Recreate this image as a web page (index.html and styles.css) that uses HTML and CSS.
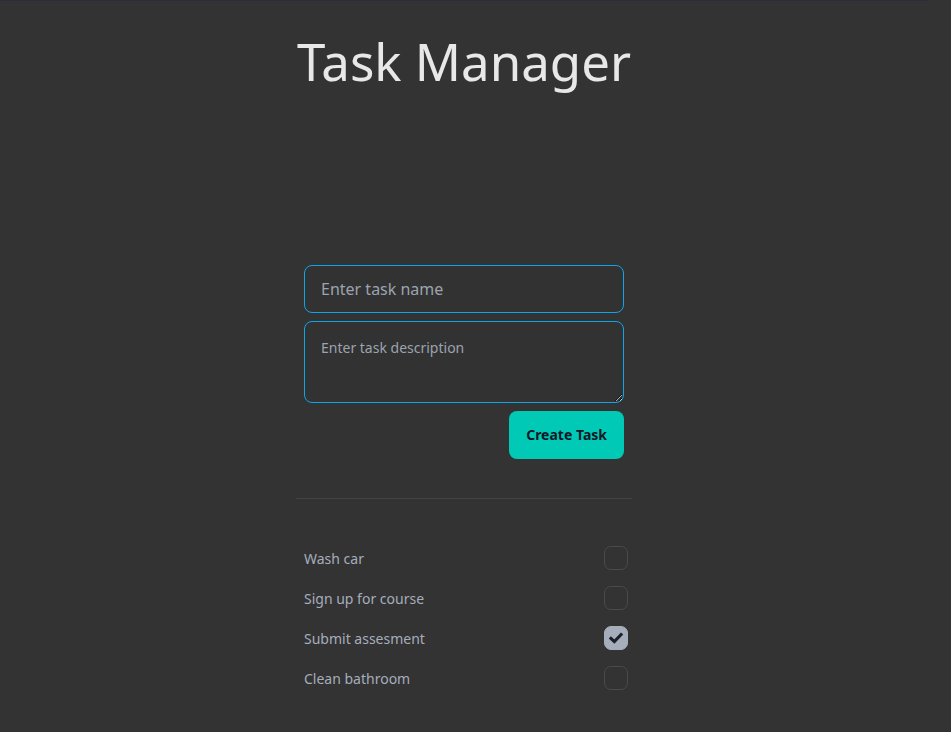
FILE: index.html
```html
<!DOCTYPE html>
<html lang="en">
<head>
<meta charset="utf-8">
<title>Task Manager</title>
<link rel="stylesheet" href="styles.css">
</head>
<body>
<div class="topline"></div>
<main class="app">
  <h1 class="title">Task Manager</h1>
  <form class="task-form">
    <input class="field field-name" type="text" placeholder="Enter task name">
    <textarea class="field field-desc" placeholder="Enter task description"></textarea>
    <div class="actions">
      <button type="button" class="btn-create">Create Task</button>
    </div>
  </form>
  <hr class="divider">
  <ul class="task-list">
    <li class="task"><span class="task-name">Wash car</span><span class="check"></span></li>
    <li class="task"><span class="task-name">Sign up for course</span><span class="check"></span></li>
    <li class="task"><span class="task-name">Submit assesment</span><span class="check checked"><svg viewBox="0 0 24 24" width="24" height="24"><path d="M6.5 12.5 L10.2 16 L17.5 8.3" fill="none" stroke="#1c2029" stroke-width="3.4" stroke-linecap="square" stroke-linejoin="miter"/></svg></span></li>
    <li class="task"><span class="task-name">Clean bathroom</span><span class="check"></span></li>
  </ul>
</main>
</body>
</html>
```
FILE: styles.css
```css
* { box-sizing: border-box; }
html, body { margin: 0; padding: 0; }
body {
  background: #333333;
  font-family: "Noto Sans", "Open Sans", sans-serif;
  min-height: 732px;
  padding-right: 23px;
}
.topline {
  height: 1px;
  background: #2b2d3a;
}
.app {
  width: 336px;
  margin: 0 auto;
}
.title {
  margin: 0;
  padding-top: 22px;
  font-size: 51px;
  font-weight: 400;
  line-height: 76px;
  color: #e8e8e8;
  text-align: center;
  white-space: nowrap;
  letter-spacing: 0;
}
.task-form {
  margin-top: 166px;
  padding: 0 8px;
  display: flex;
  flex-direction: column;
  gap: 8px;
}
.field {
  display: block;
  width: 100%;
  background: #323232;
  border: 1px solid #0ea5e9;
  border-radius: 8px;
  color: #e5e5e5;
  font-family: inherit;
  outline: none;
}
.field::placeholder { color: #9ca3af; }
.field-name {
  height: 48px;
  padding: 0 16px;
  font-size: 16px;
}
.field-desc {
  height: 82px;
  padding: 16px;
  font-size: 14px;
  resize: vertical;
}
.actions {
  display: flex;
  justify-content: flex-end;
}
.btn-create {
  height: 48px;
  padding: 0 17px 2px;
  background: #00c9b5;
  border: none;
  border-radius: 8px;
  color: #111827;
  font-family: inherit;
  font-weight: 700;
  font-size: 14px;
}
.divider {
  margin: 39px 0 0;
  border: none;
  border-top: 1px solid #444444;
}
.task-list {
  list-style: none;
  margin: 39px 0 0;
  padding: 0 4px 0 8px;
}
.task {
  height: 40px;
  display: flex;
  align-items: center;
  justify-content: space-between;
  font-size: 14px;
  color: #a6adbb;
}
.check {
  width: 24px;
  height: 24px;
  border: 1px solid #4a4a4a;
  border-radius: 7px;
  display: flex;
  align-items: center;
  justify-content: center;
}
.check.checked {
  background: #a6adbb;
  border-color: #a6adbb;
}
.check svg { display: block; }
```
